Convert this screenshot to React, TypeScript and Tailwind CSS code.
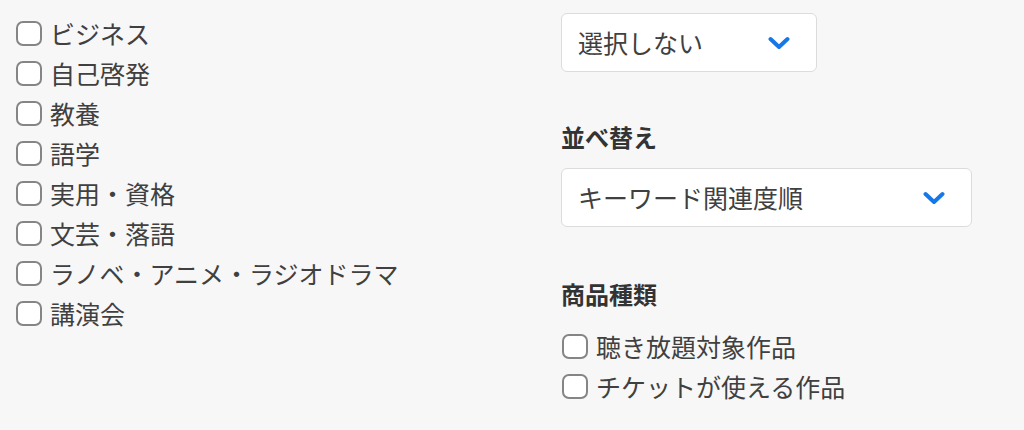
import { useState } from 'react';

const genres = [
  'ビジネス',
  '自己啓発',
  '教養',
  '語学',
  '実用・資格',
  '文芸・落語',
  'ラノベ・アニメ・ラジオドラマ',
  '講演会',
];

const productTypes = ['聴き放題対象作品', 'チケットが使える作品'];

function Check({ label }: { label: string }) {
  const [checked, setChecked] = useState(false);
  return (
    <label className="flex h-[40px] cursor-pointer items-center gap-[8px]">
      <span
        onClick={() => setChecked(!checked)}
        className={
          'block h-[25px] w-[26px] shrink-0 rounded-[7px] border-2 border-[#858585] ' +
          (checked ? 'bg-[#1a7de6]' : 'bg-white')
        }
      />
      <span className="text-[25px] leading-none text-[#404040]">{label}</span>
    </label>
  );
}

function Chevron() {
  return (
    <svg width="22" height="14" viewBox="0 0 22 14" fill="none">
      <path
        d="M2.5 3 L11 11 L19.5 3"
        stroke="#1677e6"
        strokeWidth="4"
        strokeLinecap="round"
        strokeLinejoin="round"
      />
    </svg>
  );
}

function Select({ value, width }: { value: string; width: string }) {
  return (
    <div
      className={
        'flex h-[59px] items-center justify-between rounded-[6px] border border-[#dcdcdc] bg-white pl-[16px] pr-[26px] ' +
        width
      }
    >
      <span className="text-[25px] leading-none text-[#404040]">{value}</span>
      <Chevron />
    </div>
  );
}

export default function App() {
  return (
    <div
      className="flex h-[430px] w-[1024px] bg-[#f7f7f7]"
      style={{ fontFamily: '"Noto Sans CJK JP", "Noto Sans", sans-serif' }}
    >
      <div className="flex w-[545px] flex-col pl-[16px] pt-[13px]">
        {genres.map((g) => (
          <Check key={g} label={g} />
        ))}
      </div>

      <div className="flex flex-col pl-[16px] pt-[13px]">
        <Select value="選択しない" width="w-[256px]" />

        <h3 className="mt-[49px] h-[32px] text-[24px] font-bold leading-[32px] text-[#333]">
          並べ替え
        </h3>
        <div className="mt-[15px]">
          <Select value="キーワード関連度順" width="w-[411px]" />
        </div>

        <h3 className="mt-[51px] h-[32px] text-[24px] font-bold leading-[32px] text-[#333]">
          商品種類
        </h3>
        <div className="mt-[16px] flex flex-col pl-[1px]">
          {productTypes.map((p) => (
            <Check key={p} label={p} />
          ))}
        </div>
      </div>
    </div>
  );
}
